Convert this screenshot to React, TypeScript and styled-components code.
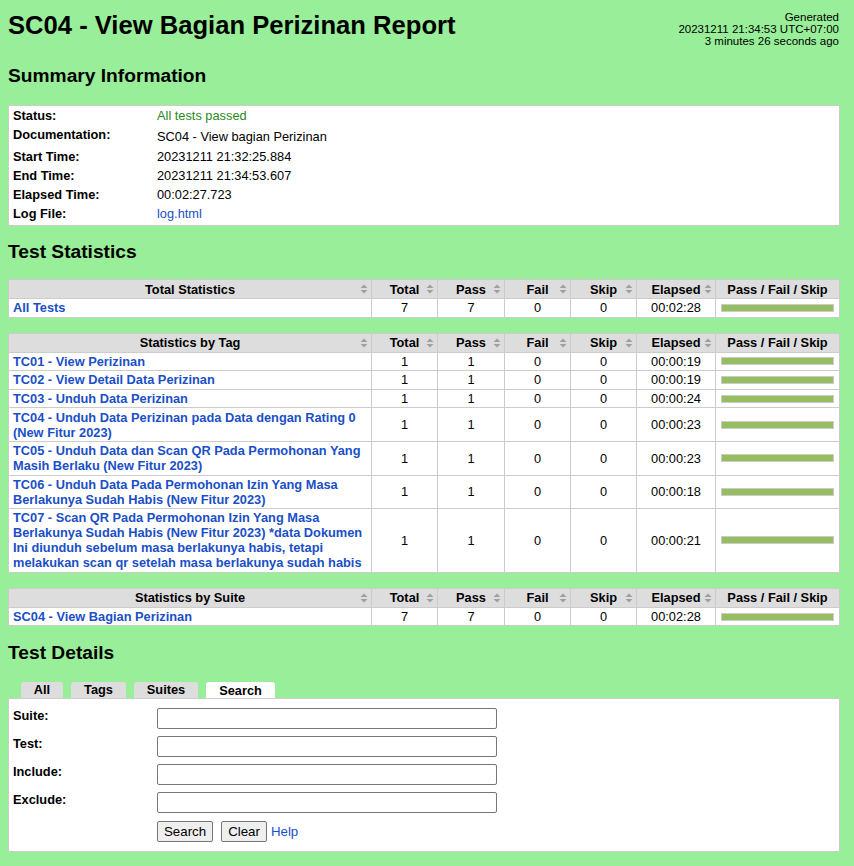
import React from 'react';
import styled, { createGlobalStyle } from 'styled-components';

const GlobalStyle = createGlobalStyle`
  html, body {
    margin: 0;
    padding: 0;
    background: #99ee99;
  }
  body {
    font-family: 'Liberation Sans', Arial, Helvetica, sans-serif;
    font-size: 12.8px;
    color: black;
  }
`;

const Page = styled.div`
  padding: 2px 14px 16px 8px;
  width: 832px;
`;

const Header = styled.div`
  display: flex;
  justify-content: space-between;
  align-items: flex-start;
  height: 48px;
  margin-top: 8px;
`;

const Title = styled.h1`
  margin: 0;
  font-size: 25.6px;
  line-height: 30px;
  font-weight: bold;
`;

const Generated = styled.div`
  text-align: right;
  font-size: 11.5px;
  line-height: 12px;
  white-space: nowrap;
  padding-top: 1px;
  margin-right: 1px;
`;

const Heading = styled.h2<{ $top?: number; $bottom?: number }>`
  margin: ${(p) => p.$top ?? 16}px 0 ${(p) => p.$bottom ?? 18}px 0;
  font-size: 19.2px;
  line-height: 22px;
  font-weight: bold;
`;

const Details = styled.table`
  width: 832px;
  border: 1px solid #ccc;
  border-collapse: collapse;
  background: white;

  th {
    width: 136px;
    text-align: left;
    vertical-align: top;
    padding: 2px 4px;
    line-height: 15px;
    white-space: nowrap;
  }
  td {
    vertical-align: top;
    padding: 2px 4px;
    line-height: 15px;
  }
`;

const DocRow = styled.tr`
  td { padding-top: 4px; padding-bottom: 3px; }
`;

const LastRow = styled.tr`
  th, td { padding-bottom: 4px; }
`;

const Pass = styled.span`
  color: #2a8a1a;
`;

const Link = styled.a`
  color: #1a4fc7;
  text-decoration: none;
`;

const StrongLink = styled(Link)`
  font-weight: bold;
`;

const Stats = styled.table`
  width: 832px;
  table-layout: fixed;
  border-collapse: collapse;
  background: white;
  margin-bottom: 15px;

  th, td {
    border: 1px solid #ccc;
  }
  th {
    background: #dddddd;
    padding: 1.5px 4px;
    line-height: 15px;
    font-weight: bold;
    text-align: center;
    position: relative;
  }
  td {
    padding: 1.3px 4px;
    line-height: 15px;
    text-align: center;
  }
  td:first-child {
    text-align: left;
  }
`;

const SortIcon = () => (
  <SortWrap width="8" height="10" viewBox="0 0 8 10">
    <path d="M4 0.5 L7.5 4 L0.5 4 Z" fill="#a0a0a0" />
    <path d="M4 9.5 L7.5 6 L0.5 6 Z" fill="#a0a0a0" />
  </SortWrap>
);

const SortWrap = styled.svg`
  position: absolute;
  right: 3px;
  top: 50%;
  margin-top: -5px;
`;

const Bar = styled.div`
  height: 6px;
  border: 1px solid #cccccc;
  background: #97bd61;
  margin: 0 1px 0 1px;
`;

interface Row {
  name: string;
  total: number;
  pass: number;
  fail: number;
  skip: number;
  elapsed: string;
}

const StatTable = ({ title, rows }: { title: string; rows: Row[] }) => (
  <Stats>
    <colgroup>
      <col />
      <col style={{ width: 66 }} />
      <col style={{ width: 67 }} />
      <col style={{ width: 66 }} />
      <col style={{ width: 66 }} />
      <col style={{ width: 79 }} />
      <col style={{ width: 124 }} />
    </colgroup>
    <thead>
      <tr>
        <th>{title}<SortIcon /></th>
        <th>Total<SortIcon /></th>
        <th>Pass<SortIcon /></th>
        <th>Fail<SortIcon /></th>
        <th>Skip<SortIcon /></th>
        <th>Elapsed<SortIcon /></th>
        <th>Pass / Fail / Skip</th>
      </tr>
    </thead>
    <tbody>
      {rows.map((r) => (
        <tr key={r.name}>
          <td><StrongLink href="#">{r.name}</StrongLink></td>
          <td>{r.total}</td>
          <td>{r.pass}</td>
          <td>{r.fail}</td>
          <td>{r.skip}</td>
          <td>{r.elapsed}</td>
          <td><Bar /></td>
        </tr>
      ))}
    </tbody>
  </Stats>
);

const Tabs = styled.div`
  display: flex;
  gap: 8px;
  padding-left: 13px;
  height: 16px;
`;

const Tab = styled.div<{ $active?: boolean; $w: number }>`
  height: 16px;
  width: ${(p) => p.$w}px;
  background: ${(p) => (p.$active ? 'white' : '#dddddd')};
  border-radius: 3px 3px 0 0;
  font-weight: bold;
  line-height: ${(p) => (p.$active ? 18 : 16)}px;
  text-align: center;
`;

const SearchBox = styled.div`
  background: white;
  border: 1px solid #cccccc;
  padding: 9px 4px 9px 4px;
  display: grid;
  grid-template-columns: 144px 340px;
  row-gap: 7px;
`;

const FieldLabel = styled.label`
  font-weight: bold;
  line-height: 15px;
`;

const Input = styled.input`
  width: 340px;
  height: 21px;
  box-sizing: border-box;
  border: 1px solid #767676;
  border-radius: 2px;
  margin: 0;
  padding: 1px 2px;
`;

const Buttons = styled.div`
  grid-column: 2;
  display: flex;
  align-items: center;
  gap: 8px;
  margin-top: 1px;
`;

const Button = styled.button`
  height: 21px;
  padding: 0 6px;
  font-family: 'Liberation Sans', Arial, sans-serif;
  font-size: 13.3px;
  background: #efefef;
  border: 1px solid #767676;
  border-radius: 2px;
  color: black;
`;

const HelpLink = styled(Link)`
  margin-left: -4px;
  font-size: 13.3px;
`;

const tagRows: Row[] = [
  { name: 'TC01 - View Perizinan', total: 1, pass: 1, fail: 0, skip: 0, elapsed: '00:00:19' },
  { name: 'TC02 - View Detail Data Perizinan', total: 1, pass: 1, fail: 0, skip: 0, elapsed: '00:00:19' },
  { name: 'TC03 - Unduh Data Perizinan', total: 1, pass: 1, fail: 0, skip: 0, elapsed: '00:00:24' },
  { name: 'TC04 - Unduh Data Perizinan pada Data dengan Rating 0 (New Fitur 2023)', total: 1, pass: 1, fail: 0, skip: 0, elapsed: '00:00:23' },
  { name: 'TC05 - Unduh Data dan Scan QR Pada Permohonan Yang Masih Berlaku (New Fitur 2023)', total: 1, pass: 1, fail: 0, skip: 0, elapsed: '00:00:23' },
  { name: 'TC06 - Unduh Data Pada Permohonan Izin Yang Masa Berlakunya Sudah Habis (New Fitur 2023)', total: 1, pass: 1, fail: 0, skip: 0, elapsed: '00:00:18' },
  { name: 'TC07 - Scan QR Pada Permohonan Izin Yang Masa Berlakunya Sudah Habis (New Fitur 2023) *data Dokumen Ini diunduh sebelum masa berlakunya habis, tetapi melakukan scan qr setelah masa berlakunya sudah habis', total: 1, pass: 1, fail: 0, skip: 0, elapsed: '00:00:21' },
];

export default function App() {
  return (
    <Page>
      <GlobalStyle />
      <Header>
        <Title>SC04 - View Bagian Perizinan Report</Title>
        <Generated>
          Generated<br />
          20231211 21:34:53 UTC+07:00<br />
          3 minutes 26 seconds ago
        </Generated>
      </Header>

      <Heading $top={7} $bottom={18}>Summary Information</Heading>
      <Details>
        <tbody>
          <tr><th>Status:</th><td><Pass>All tests passed</Pass></td></tr>
          <DocRow><th>Documentation:</th><td>SC04 - View bagian Perizinan</td></DocRow>
          <tr><th>Start Time:</th><td>20231211 21:32:25.884</td></tr>
          <tr><th>End Time:</th><td>20231211 21:34:53.607</td></tr>
          <tr><th>Elapsed Time:</th><td>00:02:27.723</td></tr>
          <LastRow><th>Log File:</th><td><Link href="#">log.html</Link></td></LastRow>
        </tbody>
      </Details>

      <Heading $top={15} $bottom={16}>Test Statistics</Heading>
      <StatTable
        title="Total Statistics"
        rows={[{ name: 'All Tests', total: 7, pass: 7, fail: 0, skip: 0, elapsed: '00:02:28' }]}
      />
      <StatTable title="Statistics by Tag" rows={tagRows} />
      <StatTable
        title="Statistics by Suite"
        rows={[{ name: 'SC04 - View Bagian Perizinan', total: 7, pass: 7, fail: 0, skip: 0, elapsed: '00:02:28' }]}
      />

      <Heading $top={16}>Test Details</Heading>
      <Tabs>
        <Tab $w={42}>All</Tab>
        <Tab $w={55}>Tags</Tab>
        <Tab $w={64}>Suites</Tab>
        <Tab $w={69} $active>Search</Tab>
      </Tabs>
      <SearchBox>
        <FieldLabel>Suite:</FieldLabel>
        <Input />
        <FieldLabel>Test:</FieldLabel>
        <Input />
        <FieldLabel>Include:</FieldLabel>
        <Input />
        <FieldLabel>Exclude:</FieldLabel>
        <Input />
        <Buttons>
          <Button>Search</Button>
          <Button>Clear</Button>
          <HelpLink href="#">Help</HelpLink>
        </Buttons>
      </SearchBox>
    </Page>
  );
}
